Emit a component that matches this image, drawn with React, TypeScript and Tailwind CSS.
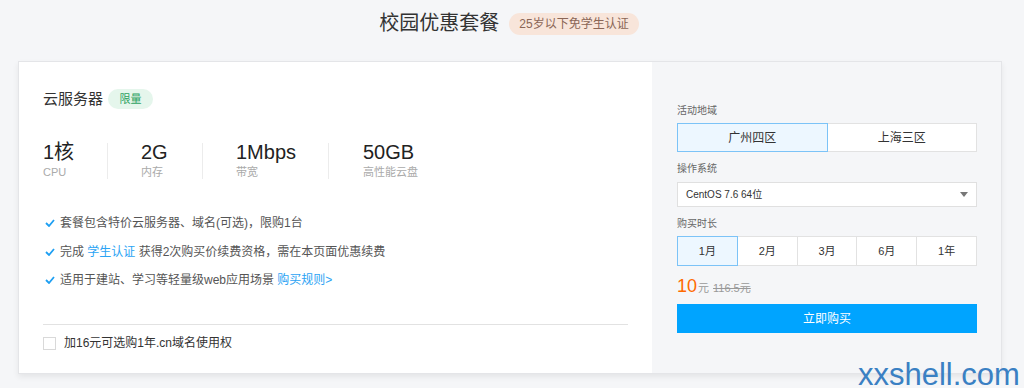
import React from "react";

const specs = [
  { value: "1核", label: "CPU", width: "w-[64px]", pl: "pl-0" },
  { value: "2G", label: "内存", width: "w-[94px]", pl: "pl-[33px]" },
  { value: "1Mbps", label: "带宽", width: "w-[125px]", pl: "pl-[33px]" },
  { value: "50GB", label: "高性能云盘", width: "w-[120px]", pl: "pl-[34px]" },
];

const durations = ["1月", "2月", "3月", "6月", "1年"];

function Check() {
  return (
    <svg width="10" height="8" viewBox="0 0 10 8" className="shrink-0">
      <path d="M1 4l3 3 5-6" fill="none" stroke="#1e9ff2" strokeWidth="1.8" />
    </svg>
  );
}

function ServerInfo() {
  return (
    <div className="flex-1 bg-white px-[24px] pt-[27px]">
      <div className="flex items-center h-[20px] gap-[5px]">
        <span className="text-[15px] text-[#333]">云服务器</span>
        <span className="h-[20px] w-[45px] rounded-full bg-[#e5f6ec] text-[#2ea262] text-[11px] flex items-center justify-center">
          限量
        </span>
      </div>

      <div className="flex mt-[31px]">
        {specs.map((s, i) => (
          <React.Fragment key={s.label}>
            {i > 0 && <div className="w-px h-[36px] mt-[3px] bg-[#ececec]" />}
            <div className={`${s.width} ${s.pl}`}>
              <div className="text-[20px] leading-[24px] text-[#222]">{s.value}</div>
              <div className="text-[11px] leading-[16px] text-[#aaa]">{s.label}</div>
            </div>
          </React.Fragment>
        ))}
      </div>

      <div className="mt-[33px] flex flex-col gap-[8.5px] text-[12px] text-[#555]">
        <div className="flex items-center h-[20px] gap-[5px] pl-[2px]">
          <Check />
          <span>套餐包含特价云服务器、域名(可选)，限购1台</span>
        </div>
        <div className="flex items-center h-[20px] gap-[5px] pl-[2px]">
          <Check />
          <span>
            完成 <span className="text-[#2ba3f4]">学生认证</span> 获得2次购买价续费资格，需在本页面优惠续费
          </span>
        </div>
        <div className="flex items-center h-[20px] gap-[5px] pl-[2px]">
          <Check />
          <span>
            适用于建站、学习等轻量级web应用场景 <span className="text-[#2ba3f4]">购买规则&gt;</span>
          </span>
        </div>
      </div>

      <div className="mt-[34px] h-px bg-[#e2e2e2]" />
      <label className="mt-[8px] flex items-center h-[20px] gap-[8px] text-[12px] text-[#333]">
        <span className="w-[13px] h-[13px] border border-[#d9d9d9] bg-white" />
        加16元可选购1年.cn域名使用权
      </label>
    </div>
  );
}

function OrderPanel() {
  return (
    <div className="w-[349px] bg-[#f5f6f8] pl-[25px] pr-[24px] pt-[41px] text-[#333]">
      <div className="text-[10px] leading-[16px] text-[#666]">活动地域</div>
      <div className="mt-[4px] flex h-[29px] text-[12px]">
        <div className="flex-1 flex items-center justify-center border border-[#7cc3f7] bg-[#edf7ff] relative z-10">
          广州四区
        </div>
        <div className="flex-1 flex items-center justify-center border border-[#e2e2e2] border-l-0 bg-white">
          上海三区
        </div>
      </div>

      <div className="mt-[9px] text-[10px] leading-[16px] text-[#666]">操作系统</div>
      <div className="mt-[5px] h-[25px] flex items-center justify-between border border-[#e0e0e0] bg-white pl-[8px] pr-[8px] text-[10px] text-[#333]">
        <span>CentOS 7.6 64位</span>
        <svg width="8" height="5" viewBox="0 0 8 5">
          <path d="M0 0h8L4 5z" fill="#777" />
        </svg>
      </div>

      <div className="mt-[9px] text-[10px] leading-[16px] text-[#666]">购买时长</div>
      <div className="mt-[4px] flex h-[30px] text-[11px]">
        {durations.map((d, i) => (
          <div
            key={d}
            className={
              i === 0
                ? "flex-1 flex items-center justify-center border border-[#7cc3f7] bg-[#edf7ff]"
                : "flex-1 flex items-center justify-center border border-[#e2e2e2] border-l-0 bg-white"
            }
          >
            {d}
          </div>
        ))}
      </div>

      <div className="mt-[8px] h-[24px] flex items-baseline">
        <span className="text-[18px] leading-[24px] text-[#ff6a00]">10</span>
        <span className="text-[11px] text-[#999] ml-[1px]">元</span>
        <span className="text-[11px] text-[#999] ml-[4px] line-through">116.5元</span>
      </div>

      <button className="mt-[6px] w-full h-[29px] bg-[#00a4ff] text-white text-[12px]">立即购买</button>
    </div>
  );
}

export default function App() {
  return (
    <div
      className="relative w-[1024px] h-[388px] overflow-hidden bg-[#f5f6f8]"
      style={{ fontFamily: '"Liberation Sans", "Noto Sans CJK SC", sans-serif' }}
    >
      <div className="h-[46px] flex items-center justify-center gap-[10px] pr-[6px]">
        <h1 className="text-[20px] text-[#333]">校园优惠套餐</h1>
        <span className="h-[22px] px-[10px] rounded-full bg-[#f8e5da] text-[12px] text-[#8a6656] flex items-center mt-[2px]">
          25岁以下免学生认证
        </span>
      </div>

      <div className="mt-[15px] ml-[18px] w-[984px] h-[313px] flex border border-[#e4e5e8] shadow-[0_3px_6px_rgba(0,0,0,0.07)]">
        <ServerInfo />
        <OrderPanel />
      </div>

      <div className="absolute left-[858px] top-[359px] text-[31px] leading-[31px] text-[#3a80c3]">
        xxshell.com
      </div>
    </div>
  );
}
